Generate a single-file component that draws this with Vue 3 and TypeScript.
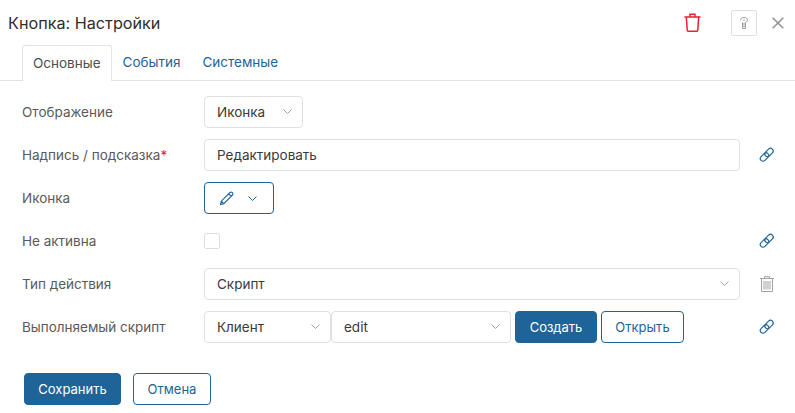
<script setup lang="ts">
const tabs = ['Основные', 'События', 'Системные'];
</script>

<template>
  <div class="dialog">
    <header class="head">
      <h1 class="title">Кнопка: Настройки</h1>
      <svg class="trash" width="17" height="19" viewBox="0 0 17 19" fill="none" stroke="#e8222c" stroke-width="1.500">
        <path d="M.5 4h16M6 4V1.200h5V4M2.300 4l.9 13c0 .7.5 1.200 1.100 1.200h8.400c.6 0 1.100-.5 1.100-1.200l.9-13" />
      </svg>
      <button class="help">
        <svg width="10" height="14" viewBox="0 0 10 14" fill="none" stroke="#9a9a9a" stroke-width="1">
          <path d="M1.500 4.300C1.500 2.500 3 1.500 5 1.500s3.500 1 3.500 2.600c0 1.500-1.500 1.900-2 2.500v1.400H3.500V6.500" />
          <path d="M3.500 8v4.500h3V8M3.500 10.200h3M4.200 4h1.600" />
        </svg>
      </button>
      <svg class="close" width="12" height="12" viewBox="0 0 12 12" stroke="#8f8f8f" stroke-width="1.500">
        <path d="M.7.7l10.600 10.600M11.300.7.700 11.300" />
      </svg>
    </header>

    <nav class="tabs">
      <a v-for="(tab, i) in tabs" :key="tab" class="tab" :class="{ active: i === 0 }">{{ tab }}</a>
    </nav>

    <div class="form">
      <div class="row">
        <label class="label">Отображение</label>
        <div class="select small">
          <span>Иконка</span>
          <svg class="caret" width="9" height="5" viewBox="0 0 9 5"><path d="M.5.500l4 4 4-4" /></svg>
        </div>
      </div>

      <div class="row">
        <label class="label">Надпись / подсказка<span class="req">*</span></label>
        <div class="input grow">Редактировать</div>
        <svg class="side" width="18" height="18" viewBox="0 0 18 18" fill="none" stroke="#1f6498" stroke-width="1.200">
          <rect x="1.700" y="8.300" width="9.600" height="5.400" rx="2.700" transform="rotate(-45 6.500 11)" />
          <rect x="6.200" y="3.800" width="9.600" height="5.400" rx="2.700" transform="rotate(-45 11 6.500)" />
        </svg>
      </div>

      <div class="row">
        <label class="label">Иконка</label>
        <button class="icon-select">
          <svg width="16" height="16" viewBox="0 0 16 16" fill="none" stroke="#1f6498" stroke-width="1.100">
            <path d="M1.500 14.500l.8-3.300 8.700-8.700a1.500 1.500 0 0 1 2.100 0l.4.400a1.500 1.500 0 0 1 0 2.100l-8.700 8.700zM9.700 3.800l2.500 2.500M2.300 11.200l2.500 2.500" />
          </svg>
          <svg class="caret blue" width="9" height="5" viewBox="0 0 9 5"><path d="M.5.500l4 4 4-4" /></svg>
        </button>
      </div>

      <div class="row">
        <label class="label">Не активна</label>
        <div class="check-wrap grow"><span class="check"></span></div>
        <svg class="side" width="18" height="18" viewBox="0 0 18 18" fill="none" stroke="#1f6498" stroke-width="1.200">
          <rect x="1.700" y="8.300" width="9.600" height="5.400" rx="2.700" transform="rotate(-45 6.500 11)" />
          <rect x="6.200" y="3.800" width="9.600" height="5.400" rx="2.700" transform="rotate(-45 11 6.500)" />
        </svg>
      </div>

      <div class="row">
        <label class="label">Тип действия</label>
        <div class="select grow">
          <span>Скрипт</span>
          <svg class="caret" width="9" height="5" viewBox="0 0 9 5"><path d="M.5.500l4 4 4-4" /></svg>
        </div>
        <svg class="side" width="18" height="18" viewBox="0 0 18 18" fill="none" stroke="#a3a3a3" stroke-width="1">
          <path d="M2 3.500h14M6.500 3.500V1.700h5v1.800M3.500 3.500v13h11v-13M6 6v8.500M8 6v8.500M10 6v8.500M12 6v8.500" />
        </svg>
      </div>

      <div class="row">
        <label class="label">Выполняемый скрипт</label>
        <div class="script grow">
          <div class="select client">
            <span>Клиент</span>
            <svg class="caret" width="9" height="5" viewBox="0 0 9 5"><path d="M.5.500l4 4 4-4" /></svg>
          </div>
          <div class="select name">
            <span>edit</span>
            <svg class="caret" width="9" height="5" viewBox="0 0 9 5"><path d="M.5.500l4 4 4-4" /></svg>
          </div>
          <button class="btn primary create">Создать</button>
          <button class="btn outline open">Открыть</button>
        </div>
        <svg class="side" width="18" height="18" viewBox="0 0 18 18" fill="none" stroke="#1f6498" stroke-width="1.200">
          <rect x="1.700" y="8.300" width="9.600" height="5.400" rx="2.700" transform="rotate(-45 6.500 11)" />
          <rect x="6.200" y="3.800" width="9.600" height="5.400" rx="2.700" transform="rotate(-45 11 6.500)" />
        </svg>
      </div>
    </div>

    <footer class="foot">
      <button class="btn primary save">Сохранить</button>
      <button class="btn outline cancel">Отмена</button>
    </footer>
  </div>
</template>

<style scoped>
.dialog {
  width: 795px;
  height: 413px;
  background: #fff;
  font-family: Inter, 'Noto Sans', sans-serif;
  font-size: 13.5px;
  color: #3a3a3a;
  box-sizing: border-box;
  overflow: hidden;
}
.head {
  display: flex;
  align-items: center;
  height: 45px;
  padding: 0 11px 0 8px;
  box-sizing: border-box;
}
.title {
  margin: 0;
  font-size: 16.2px;
  font-weight: 400;
  color: #2e2e2e;
  flex: 1;
}
.trash {
  margin-right: 30px;
}
.help {
  width: 26px;
  height: 26px;
  padding: 0;
  margin-right: 15px;
  display: flex;
  align-items: center;
  justify-content: center;
  background: #fff;
  border: 1px solid #dedede;
  border-radius: 2px;
}
.tabs {
  display: flex;
  height: 36px;
  padding-left: 22px;
  border-bottom: 1px solid #e3e3e3;
  box-sizing: border-box;
}
.tab {
  padding: 0 11px;
  line-height: 35px;
  color: #1f6498;
  height: 36px;
  box-sizing: border-box;
}
.tab.active {
  color: #4a4f55;
  background: #fff;
  border: 1px solid #e3e3e3;
  border-bottom: none;
  border-radius: 3px 3px 0 0;
  padding: 0 10px;
  line-height: 34px;
}
.form {
  display: flex;
  flex-direction: column;
  gap: 11px;
  padding: 15px 19px 0 22px;
}
.row {
  display: flex;
  align-items: center;
  height: 32px;
}
.label {
  width: 182px;
  flex: none;
  color: #5a5a5a;
  margin-top: -1px;
}
.req {
  color: #e8222c;
}
.grow {
  flex: 1;
}
.select,
.input {
  display: flex;
  align-items: center;
  height: 32px;
  box-sizing: border-box;
  border: 1px solid #e0e0e0;
  border-radius: 4px;
  background: #fff;
  padding: 0 12px 1px;
  color: #3a3a3a;
}
.select {
  justify-content: space-between;
  padding-right: 10px;
}
.small {
  width: 99px;
}
.caret {
  fill: none;
  stroke: #a0a0a0;
}
.caret.blue {
  stroke: #1f6498;
}
.side {
  flex: none;
  margin-left: 18px;
}
.icon-select {
  width: 70px;
  height: 32px;
  box-sizing: border-box;
  display: flex;
  align-items: center;
  gap: 13px;
  padding: 0 0 0 14px;
  background: #fff;
  border: 1px solid #1f6498;
  border-radius: 4px;
}
.check {
  display: block;
  width: 16px;
  height: 16px;
  box-sizing: border-box;
  border: 1px solid #dedede;
  border-radius: 2px;
}
.script {
  display: flex;
  align-items: center;
}
.client {
  width: 127px;
}
.name {
  width: 180px;
}
.btn {
  height: 32px;
  box-sizing: border-box;
  padding: 0;
  font-family: inherit;
  font-size: 13px;
  border-radius: 4px;
  border: 1px solid #1f6498;
}
.primary {
  background: #1f6498;
  color: #fff;
}
.outline {
  background: #fff;
  color: #1f6498;
}
.create {
  width: 82px;
  margin-left: 4px;
}
.open {
  width: 83px;
  margin-left: 4px;
}
.foot {
  display: flex;
  gap: 12px;
  padding: 30px 0 0 24px;
}
.save {
  width: 97px;
}
.cancel {
  width: 78px;
}
</style>
